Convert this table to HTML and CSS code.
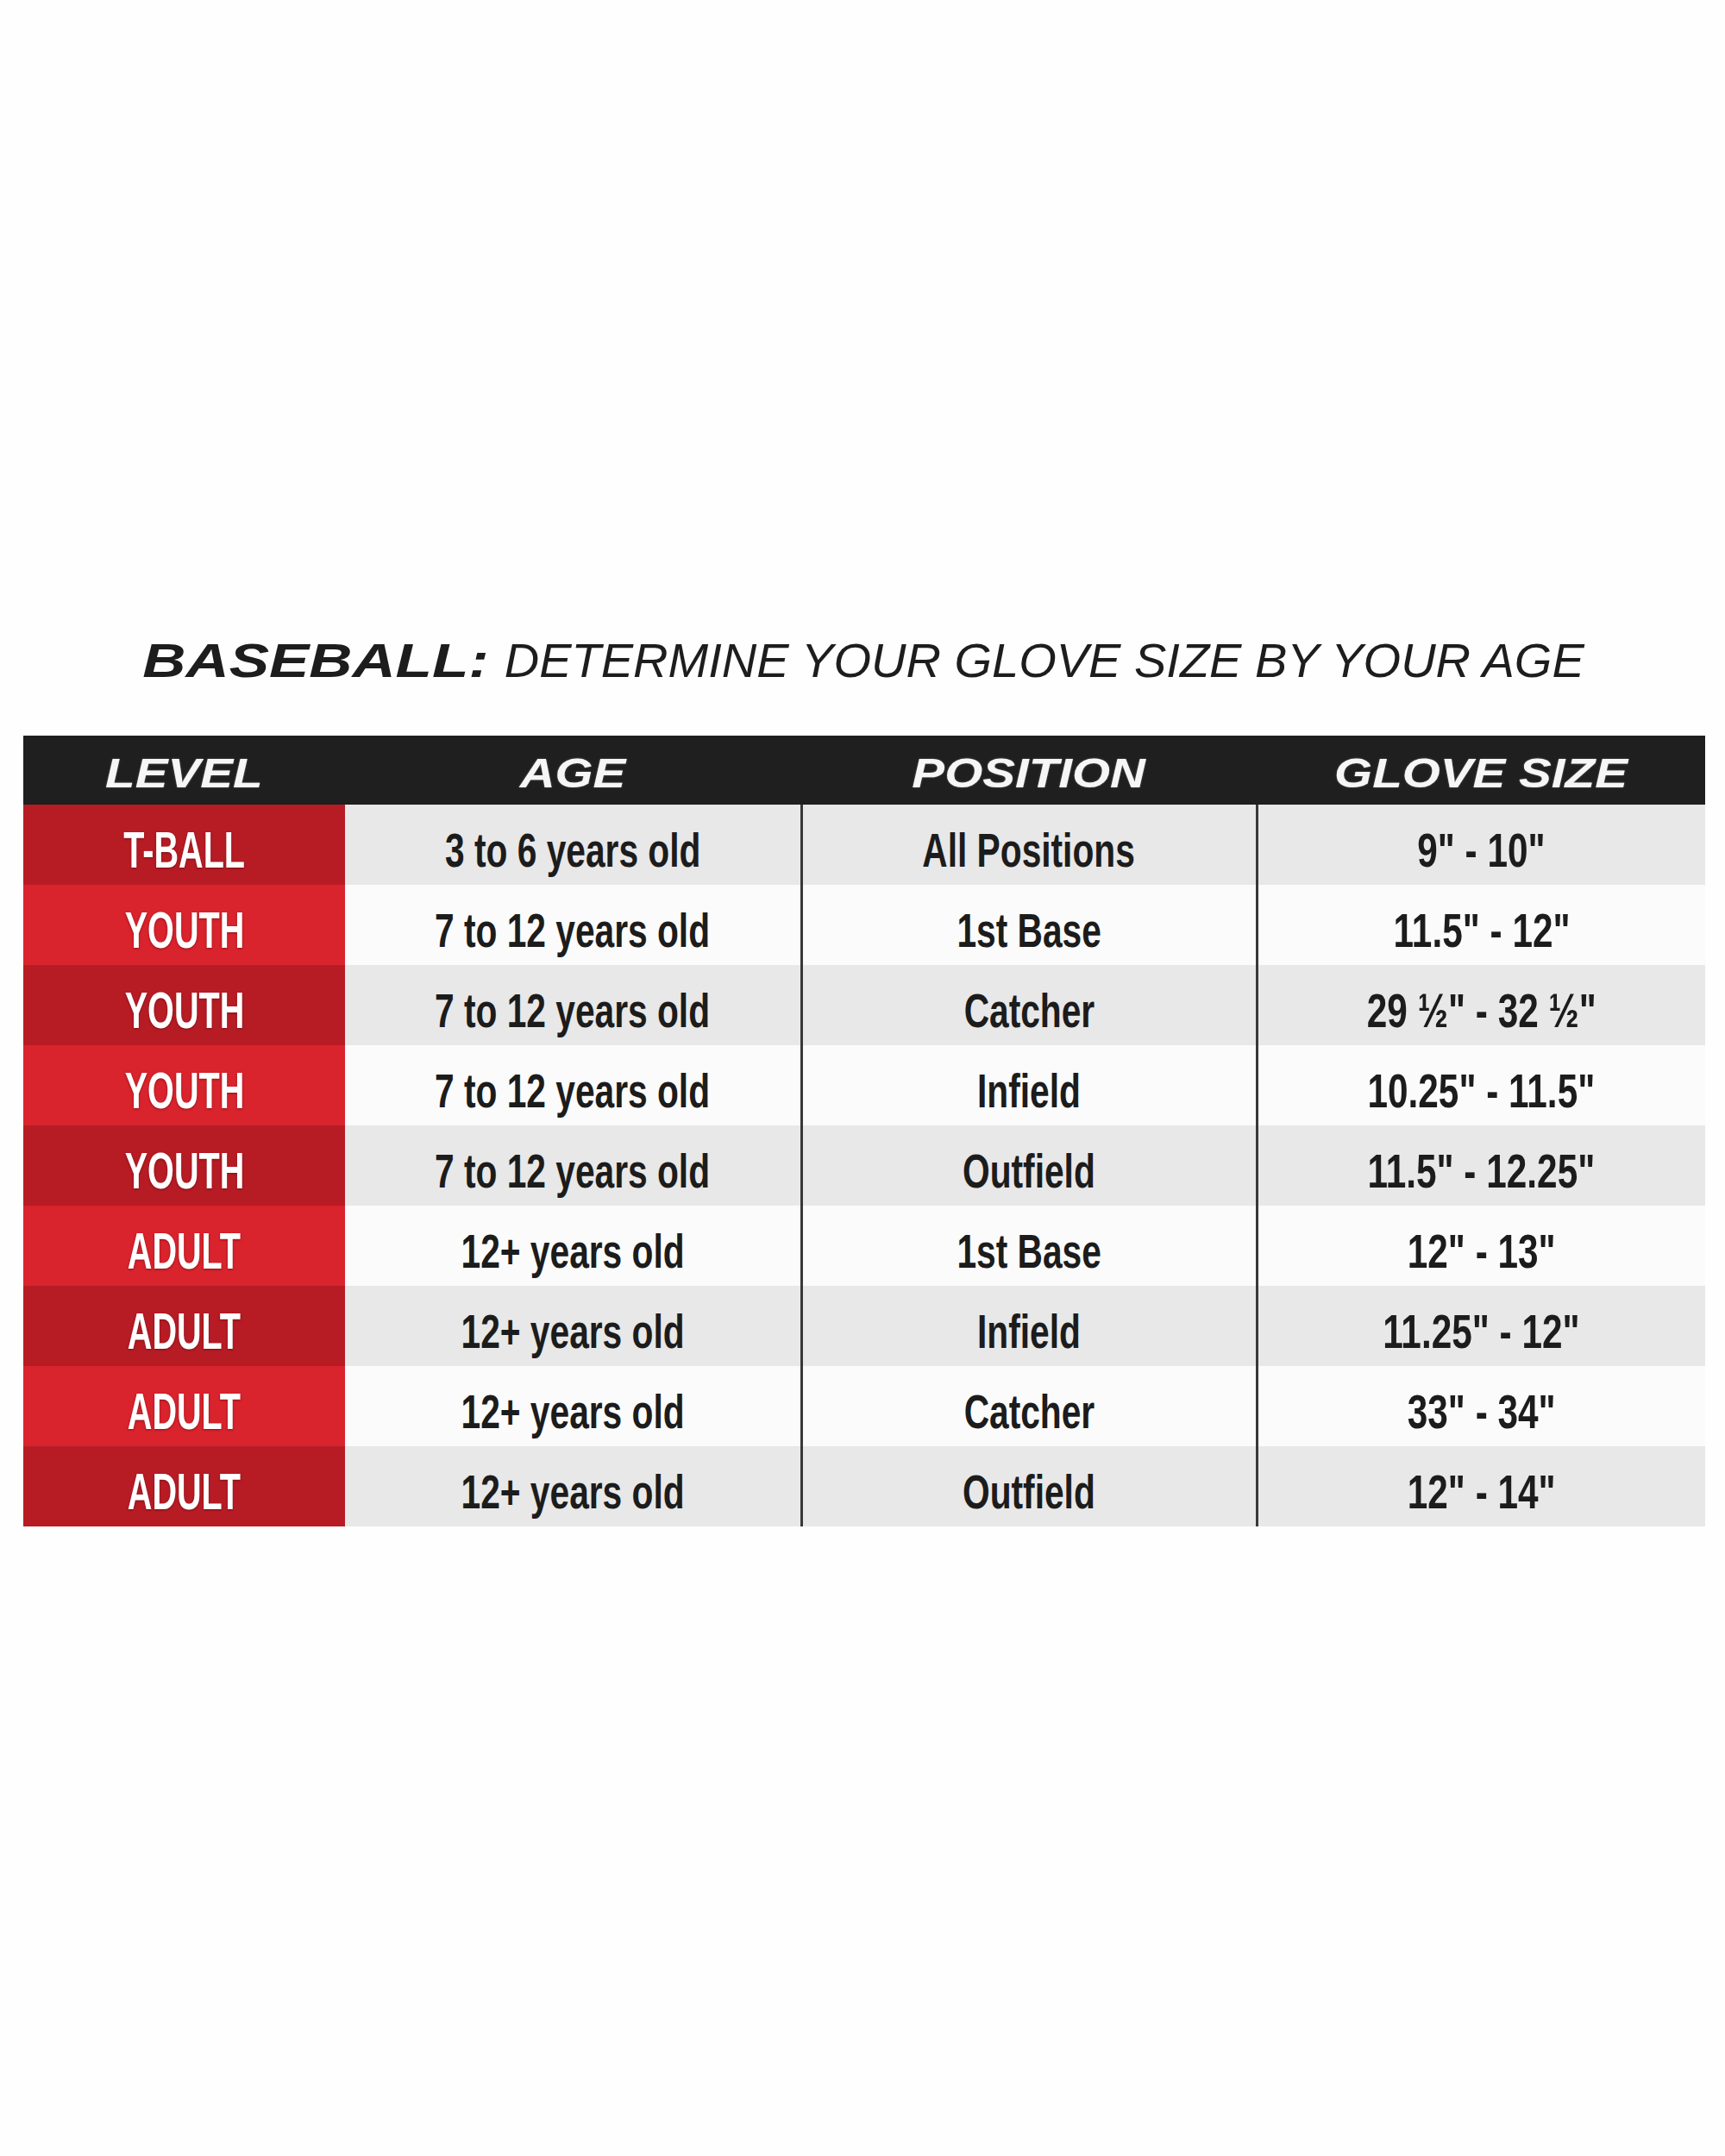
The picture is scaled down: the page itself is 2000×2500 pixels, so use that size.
FILE: index.html
```html
<!DOCTYPE html>
<html lang="en">
<head>
<meta charset="utf-8">
<title>Baseball Glove Size Chart</title>
<link rel="stylesheet" href="styles.css">
</head>
<body>
<main class="page">
  <h1 class="title"><span class="title-bold">BASEBALL:</span><span class="title-rest">DETERMINE YOUR GLOVE SIZE BY YOUR AGE</span></h1>
  <table class="chart">
    <colgroup>
      <col class="c-level"><col class="c-age"><col class="c-pos"><col class="c-size">
    </colgroup>
    <thead>
      <tr>
        <th><span class="hd">LEVEL</span></th>
        <th><span class="hd">AGE</span></th>
        <th><span class="hd">POSITION</span></th>
        <th><span class="hd">GLOVE SIZE</span></th>
      </tr>
    </thead>
    <tbody>
      <tr class="odd"><td class="level"><span class="lv">T-BALL</span></td><td><span class="tx">3 to 6 years old</span></td><td class="div"><span class="tx">All Positions</span></td><td class="div"><span class="tx sz">9" - 10"</span></td></tr>
      <tr class="even"><td class="level"><span class="lv">YOUTH</span></td><td><span class="tx">7 to 12 years old</span></td><td class="div"><span class="tx">1st Base</span></td><td class="div"><span class="tx sz">11.5" - 12"</span></td></tr>
      <tr class="odd"><td class="level"><span class="lv">YOUTH</span></td><td><span class="tx">7 to 12 years old</span></td><td class="div"><span class="tx">Catcher</span></td><td class="div"><span class="tx sz">29 ½" - 32 ½"</span></td></tr>
      <tr class="even"><td class="level"><span class="lv">YOUTH</span></td><td><span class="tx">7 to 12 years old</span></td><td class="div"><span class="tx">Infield</span></td><td class="div"><span class="tx sz">10.25" - 11.5"</span></td></tr>
      <tr class="odd"><td class="level"><span class="lv">YOUTH</span></td><td><span class="tx">7 to 12 years old</span></td><td class="div"><span class="tx">Outfield</span></td><td class="div"><span class="tx sz">11.5" - 12.25"</span></td></tr>
      <tr class="even"><td class="level"><span class="lv">ADULT</span></td><td><span class="tx">12+ years old</span></td><td class="div"><span class="tx">1st Base</span></td><td class="div"><span class="tx sz">12" - 13"</span></td></tr>
      <tr class="odd"><td class="level"><span class="lv">ADULT</span></td><td><span class="tx">12+ years old</span></td><td class="div"><span class="tx">Infield</span></td><td class="div"><span class="tx sz">11.25" - 12"</span></td></tr>
      <tr class="even"><td class="level"><span class="lv">ADULT</span></td><td><span class="tx">12+ years old</span></td><td class="div"><span class="tx">Catcher</span></td><td class="div"><span class="tx sz">33" - 34"</span></td></tr>
      <tr class="odd"><td class="level"><span class="lv">ADULT</span></td><td><span class="tx">12+ years old</span></td><td class="div"><span class="tx">Outfield</span></td><td class="div"><span class="tx sz">12" - 14"</span></td></tr>
    </tbody>
  </table>
</main>
</body>
</html>
```
FILE: styles.css
```css
html, body {
  margin: 0;
  padding: 0;
  background: #fefefe;
}

body {
  width: 2000px;
  min-height: 2500px;
  font-family: "Liberation Sans", Arial, sans-serif;
}

.page {
  padding-top: 737px;
}

.title {
  margin: 0 0 59px 0;
  height: 57px;
  display: flex;
  justify-content: center;
  align-items: center;
  font-size: 56px;
  line-height: 57px;
  font-style: italic;
  color: #1d1d1d;
  white-space: nowrap;
}

.title-bold {
  display: inline-block;
  font-weight: 700;
  margin-left: 80px;
  margin-right: 18px;
  transform: scaleX(1.24);
  transform-origin: right center;
}

.title-rest {
  display: inline-block;
  font-weight: 400;
  font-size: 56px;
}

.chart {
  margin-left: 27px;
  width: 1950px;
  border-collapse: collapse;
  table-layout: fixed;
}

.c-level { width: 373px; }
.c-age { width: 529px; }
.c-pos { width: 528px; }
.c-size { width: 520px; }

.chart th {
  height: 80px;
  padding: 0;
  background: #1f1f1f;
  color: #f6f6f6;
  text-align: center;
  vertical-align: middle;
}

.hd {
  display: inline-block;
  padding-top: 8px;
  font-size: 48px;
  font-weight: 700;
  font-style: italic;
  line-height: 1;
  transform: scaleX(1.18);
  text-shadow: 0 0 2px rgba(255, 255, 255, 0.35);
}

.chart td {
  height: 93px;
  padding: 0;
  text-align: center;
  vertical-align: middle;
  white-space: nowrap;
}

.chart td.div {
  border-left: 3px solid #383838;
}

.odd td { background: #e8e8e8; }
.even td { background: #fbfbfb; }

.odd td.level { background: #b71c25; }
.even td.level { background: #d9232d; }

.lv {
  display: inline-block;
  padding-top: 12px;
  font-size: 60px;
  font-weight: 700;
  line-height: 1;
  color: #ffffff;
  transform: scaleX(0.66);
  text-shadow: 0 1px 3px rgba(80, 0, 0, 0.55);
}

.tx {
  display: inline-block;
  padding-top: 14px;
  font-size: 55px;
  font-weight: 700;
  line-height: 1;
  color: #1c1c1c;
  transform: scaleX(0.74);
}

.tx.sz {
  transform: scaleX(0.77);
}
```
